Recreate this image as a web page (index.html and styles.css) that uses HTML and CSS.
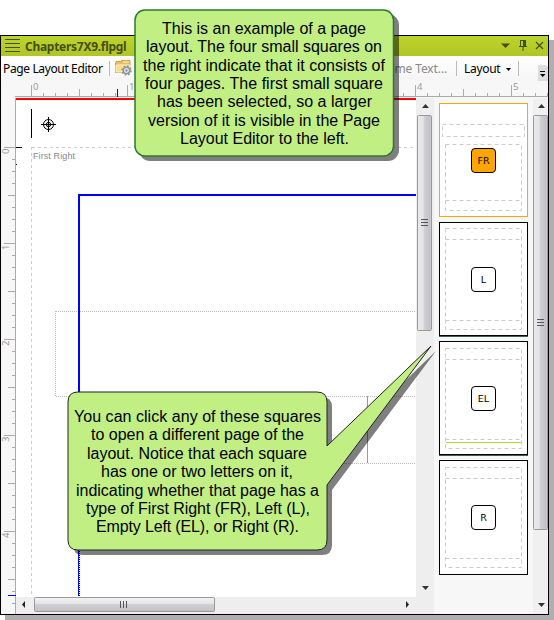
FILE: index.html
```html
<!DOCTYPE html>
<html lang="en">
<head>
<meta charset="utf-8">
<title>Page Layout Editor</title>
<link rel="stylesheet" href="styles.css">
</head>
<body>
<main class="window">
  <header class="titlebar">
    <svg class="grip" width="16" height="14"><path d="M0 .5H15M0 4.5H15M0 8.5H15M0 12.5H15" stroke="#45500f"/></svg>
    <span class="filename">Chapters7X9.flpgl</span>
    <svg class="window-icons" width="44" height="14"><path d="M0 4.500h9L4.500 9zM19 1h6v6h1v1h-3.500v4h-1V8H18V7h1z" fill="#45500f"/><path d="M20 2h2v5h-2z" fill="#b9cf2b"/><path d="M35 3l7 7M42 3l-7 7" stroke="#45500f" stroke-width="1.300"/></svg>
  </header>
  <nav class="toolbar">
    <span class="tool-title">Page Layout Editor</span>
    <i class="divider"></i>
    <svg class="folder" width="18" height="17"><path d="M.5 12.500V3l1-1.500h4L7 0h7l1 1v11.500z" fill="#e9bd63" stroke="#d09a3c"/><path d="M8 2h6M1 5h14v7H1z" fill="#f8dc91" stroke="#fff1c2"/><circle cx="11.500" cy="10.500" r="3.200" fill="#eee" stroke="#8c949e" stroke-width="1.500"/><circle cx="11.500" cy="10.500" r="4.500" fill="none" stroke="#8c949e" stroke-width="1.500" stroke-dasharray="1.700 1.830"/><circle cx="11.500" cy="10.500" r="1.200" fill="#8c949e"/></svg>
    <span class="frame-text">Frame Text...</span>
    <i class="divider"></i>
    <span class="layout-label">Layout</span>
    <svg class="drop" width="5" height="3"><path d="M0 0h5L2.500 3z"/></svg>
    <i class="divider last"></i>
    <svg class="overflow" width="10" height="16"><path d="M0 0h6q4 0 4 4v12H0z" fill="#ddd"/><path d="M2 6.500h5" stroke="#000"/><path d="M2 9h5.500L4.700 12z"/></svg>
  </nav>
  <svg class="ruler-x" width="547" height="17">
    <defs>
      <pattern id="tx" x="30" width="96" height="17" patternUnits="userSpaceOnUse"><path d="M.5 4v12M12.500 12v4M24.500 12v4M36.500 12v4M48.500 8v8M60.500 12v4M72.500 12v4M84.500 12v4" stroke="#aaa"/></pattern>
    </defs>
    <rect x="30" width="517" height="16" fill="url(#tx)"/>
    <path d="M14 15.500H547" stroke="#aaa"/><path d="M116.500 8v8" stroke="#00f"/>
    <text x="32" y="9">0</text><text x="128" y="9">1</text><text x="416" y="9">4</text><text x="512" y="9">5</text>
  </svg>
  <section class="workspace">
    <svg class="ruler-y" width="15" height="516">
      <defs><pattern id="ty" y="49" width="15" height="96" patternUnits="userSpaceOnUse"><path d="M3 .5h11M11 12.500h3M11 24.500h3M11 36.500h3M7 48.500h7M11 60.500h3M11 72.500h3M11 84.500h3" stroke="#aaa"/></pattern></defs>
      <rect y="49" width="15" height="465" fill="url(#ty)"/>
      <path d="M14.500 0V516" stroke="#aaa"/><path d="M7 497.500h8" stroke="#00f"/>
      <g class="vnums"><text transform="translate(8 56) rotate(-90)">0</text><text transform="translate(8 152) rotate(-90)">1</text><text transform="translate(8 248) rotate(-90)">2</text><text transform="translate(8 344) rotate(-90)">3</text><text transform="translate(8 440) rotate(-90)">4</text></g>
    </svg>
    <div class="document">
      <svg class="canvas" width="401" height="499">
        <path d="M0 1H400" stroke="red" stroke-width="2"/>
        <path d="M15.500 11v29M0 49.500h6M0 66.500h1" stroke="#000"/>
        <g fill="none" stroke="#000"><circle cx="32.500" cy="26.500" r="5"/><circle cx="32.500" cy="26.500" r="2.200"/><path d="M25 26.500h15M32.500 19v15"/></g>
        <path d="M15.500 49V497M16 49.500H400" stroke="#ccc" stroke-dasharray="3 3"/>
        <text x="17" y="61" textLength="42">First Right</text>
        <path d="M39.500 213V298M40 213.500H400M40 298.500H400M300 365.500H400" stroke="#bbb" stroke-dasharray="1 1"/>
        <path d="M351.500 298v67" stroke="#999"/>
        <path d="M63 498V97H400" fill="none" stroke="#00f" stroke-width="2"/>
        <path d="M63.500 452V498" stroke="#fff" stroke-dasharray="1 1"/>
      </svg>
      <svg class="vscroll" width="17" height="499">
        <use href="#up" x="5" y="6"/><rect x=".5" y="17.500" width="14" height="215" rx="1" fill="url(#metal)" stroke="#999"/><use href="#grip-h" x="4" y="121"/><use href="#down" x="5" y="488"/>
      </svg>
      <svg class="hscroll" width="401" height="17">
        <path d="M9 4v7L6 7.500z" fill="#222"/><rect x="18.500" y=".5" width="180" height="14" rx="1" fill="url(#metal-h)" stroke="#999"/><path d="M104.500 4v7M107.500 4v7M110.500 4v7" stroke="#555"/><path d="M390 4v7l3-3.500z" fill="#222"/>
      </svg>
      <i class="corner"></i>
    </div>
    <aside class="pages">
      <article class="page first"><svg width="87" height="112"><path d="M2.500 20.500h82v12h-82zM5.500 40.500h76v66h-76zM5.500 96.500h76"/></svg><b>FR</b></article>
      <article class="page shaded"><svg width="87" height="112"><path d="M5.500 5.500h76v101h-76zM5.500 16.500h76M5.500 97.500h76"/></svg><b>L</b></article>
      <article class="page shaded"><svg width="87" height="112"><path d="M5.500 6.500h76v100h-76zM5.500 17.500h76M5.500 97.500h76"/><path class="rule" d="M6 100.500h76"/></svg><b>EL</b></article>
      <article class="page last-page"><svg width="87" height="113"><path d="M5.500 6.500h76v100h-76zM5.500 17.500h76M5.500 97.500h76"/></svg><b>R</b></article>
    </aside>
    <svg class="outer-scroll" width="15" height="516">
      <defs>
        <linearGradient id="metal"><stop stop-color="#e9e9eb"/><stop offset=".4" stop-color="#e4e4e6"/><stop offset=".5" stop-color="#d0d0d3"/><stop offset=".9" stop-color="#c0c0c6"/><stop offset="1" stop-color="#ddd"/></linearGradient>
        <linearGradient id="metal-h" x2="0" y2="1"><stop stop-color="#f3f3f3"/><stop offset=".45" stop-color="#e4e4e6"/><stop offset=".5" stop-color="#d0d0d3"/><stop offset="1" stop-color="#c0c0c6"/></linearGradient>
        <path id="up" d="M0 4h7L3.500 0z" fill="#333"/><path id="down" d="M0 0h7L3.500 4z" fill="#333"/>
        <path id="grip-h" d="M0 .5h7M0 3.500h7M0 6.500h7" stroke="#555"/>
      </defs>
      <use href="#up" x="5" y="6"/><rect x=".5" y="17.500" width="14" height="414" rx="1" fill="url(#metal)" stroke="#999"/><use href="#grip-h" x="4" y="221"/><use href="#down" x="5" y="505"/>
    </svg>
  </section>
</main>
<svg class="callouts" width="554" height="620">
  <rect x="139" y="14" width="260" height="147" rx="11" fill="#000" opacity=".5"/>
  <rect x="135" y="10" width="258.500" height="146" rx="10" fill="#c2ef83" stroke="#2c7a2c" stroke-width="1.500"/>
  <g class="note">
    <text x="162" y="34" textLength="204">This is an example of a page</text>
    <text x="146" y="52" textLength="236">layout. The four small squares on</text>
    <text x="143" y="71" textLength="242">the right indicate that it consists of</text>
    <text x="145" y="89" textLength="238">four pages. The first small square</text>
    <text x="157" y="107" textLength="215">has been selected, so a larger</text>
    <text x="148" y="126" textLength="232">version of it is visible in the Page</text>
    <text x="180" y="144" textLength="169">Layout Editor to the left.</text>
  </g>
  <path d="M83 397H322Q332 397 332 407V451L436 351L332 490V545Q332 555 322 555H83Q73 555 73 545V407Q73 397 83 397Z" fill="#000" opacity=".5"/>
  <path d="M78 392H317Q327 392 327 402V446L431 346L327 485V540Q327 550 317 550H78Q68 550 68 540V402Q68 392 78 392Z" fill="#c2ef83" stroke="#222"/>
  <g class="note">
    <text x="74" y="422" textLength="247">You can click any of these squares</text>
    <text x="91" y="440" textLength="213">to open a different page of the</text>
    <text x="87" y="459" textLength="220">layout. Notice that each square</text>
    <text x="101" y="477" textLength="192">has one or two letters on it,</text>
    <text x="76" y="496" textLength="243">indicating whether that page has a</text>
    <text x="86" y="514" textLength="224">type of First Right (FR), Left (L),</text>
    <text x="96" y="532" textLength="203">Empty Left (EL), or Right (R).</text>
  </g>
</svg>
</body>
</html>
```

FILE: styles.css
```css
* { box-sizing: border-box; }
body { margin: 0; width: 554px; height: 620px; overflow: hidden; position: relative; background: #fff; padding-top: 35px; font-family: "Noto Sans", sans-serif; }
svg { display: block; flex: none; }
.window { width: 549px; height: 580px; border: 1px solid #000; background: #f7f7f7; box-shadow: 5px 5px 0 #b0aeb0; }
.titlebar { display: flex; height: 20px; background: linear-gradient(#bdd42c, #b0c526); align-items: center; padding: 0 3px 0 4px; }
.filename { margin-left: 4px; font-size: 12px; font-weight: 700; color: #45500f; letter-spacing: -.28px; width: 110px; white-space: nowrap; }
.window-icons { margin-left: auto; }
.toolbar { display: flex; height: 25px; align-items: center; font-size: 12px; background: linear-gradient(#fff, #f5f5f5); white-space: nowrap; padding-left: 2px; }
.tool-title { width: 106px; letter-spacing: -.37px; }
.divider { width: 1px; height: 15px; background: #bbb; }
.folder { margin-left: 5px; }
.frame-text { margin-left: 244px; width: 79px; text-align: right; padding-right: 11px; color: #8a8a8a; letter-spacing: -.1px; }
.layout-label { margin-left: 7px; width: 42px; letter-spacing: -.3px; }
.drop { margin: 2px 7px 0 0; }
.overflow { margin-left: auto; align-self: flex-end; }
.ruler-x, .ruler-y { overflow: visible; }
.ruler-x text, .ruler-y text { font: 9.5px "Noto Sans"; fill: #999; }
.workspace { display: grid; grid-template-columns: 15px 418px 99px 15px; height: 516px; }
.document { display: grid; grid-template-columns: 401px 17px; grid-template-rows: 499px 17px; background: #eee; }
.canvas { background: linear-gradient(90deg, #fff 400px, #eee 400px); }
.canvas text { font: 9px "Liberation Sans"; fill: #888; }
.pages { display: flex; flex-direction: column; gap: 5px; padding: 5px 0 0 5px; }
.page { width: 89px; height: 114px; border: 1px solid #000; background: #fff; display: grid; place-items: center; }
.page > * { grid-area: 1 / 1; }
.page svg path { fill: none; stroke: #ccc; stroke-dasharray: 4 3; }
.page svg .rule { stroke: #bed62f; stroke-dasharray: none; }
.page b { width: 25px; height: 25px; border: 1px solid #000; border-radius: 4px; background: #fff; display: grid; place-items: center; font: 9.5px "DejaVu Sans"; z-index: 1; }
.first { border-color: orange; }
.first b { background: orange; }
.shaded { box-shadow: 0 1px 0 #3a5c5c; }
.last-page { height: 115px; }
.outer-scroll { background: #f0f0f0; }
.callouts { position: absolute; inset: 0; }
.note { font: 16px "Liberation Sans", sans-serif; }
```
